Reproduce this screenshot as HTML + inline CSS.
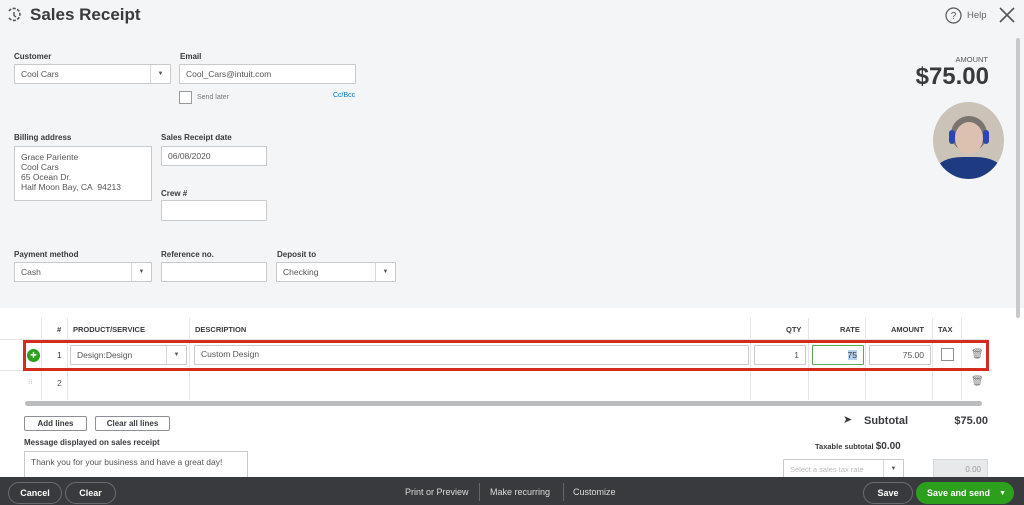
<!DOCTYPE html>
<html><head><style>
*{box-sizing:border-box;margin:0;padding:0}
body{width:1024px;height:505px;overflow:hidden;font-family:"Liberation Sans",sans-serif;background:#fff;position:relative;color:#393a3d}
.a{position:absolute}
.lbl{font-size:8px;font-weight:bold;color:#393a3d}
.in{position:absolute;background:#fff;border:1px solid #c9cacc;font-size:8.5px;color:#555;padding:0 6px;display:flex;align-items:center;border-radius:1px}
.dd{position:absolute;right:0;top:0;bottom:0;width:20px;border-left:1px solid #d4d7dc;display:flex;align-items:center;justify-content:center;font-size:6px;color:#555}
.th{position:absolute;top:325px;font-size:7.5px;font-weight:bold;color:#393a3d}
.vl{position:absolute;width:1px;background:#e3e5e8}
.btn{position:absolute;border:1px solid #8d9096;border-radius:2px;font-size:8px;font-weight:bold;display:flex;align-items:center;justify-content:center;background:#fff}
.fb{position:absolute;top:482px;height:22px;border:1px solid #6b6c72;border-radius:12px;color:#fff;font-size:9px;font-weight:bold;display:flex;align-items:center;justify-content:center}
.ft{position:absolute;top:487px;font-size:9px;color:#ddd}
</style></head><body>
<div class="a" style="left:0;top:0;width:1024px;height:308px;background:#f3f5f6"></div>
<svg class="a" style="left:6px;top:7px" width="16" height="16" viewBox="0 0 16 16"><path d="M3 4 A6 6 0 1 1 2.5 10" fill="none" stroke="#555" stroke-width="1.6" stroke-dasharray="3 1.5"/><path d="M8 5v3.5l2 1.5" fill="none" stroke="#555" stroke-width="1.4"/></svg>
<div class="a" style="left:30px;top:5px;font-size:17px;font-weight:bold;color:#393a3d">Sales Receipt</div>
<svg class="a" style="left:945px;top:7px" width="17" height="17" viewBox="0 0 17 17"><circle cx="8.5" cy="8.5" r="7.5" fill="none" stroke="#555" stroke-width="1.2"/><text x="8.5" y="12" font-size="10" text-anchor="middle" fill="#555" font-family="Liberation Sans">?</text></svg>
<div class="a" style="left:967px;top:10px;font-size:9.5px;color:#666">Help</div>
<svg class="a" style="left:999px;top:7px" width="16" height="16"><path d="M1 1L15 15M15 1L1 15" stroke="#555" stroke-width="1.6"/></svg>
<div class="a" style="left:1016px;top:38px;width:4px;height:280px;background:#c8c9cc;border-radius:2px"></div>

<div class="a lbl" style="left:14px;top:52px">Customer</div>
<div class="in" style="left:14px;top:64px;width:157px;height:20px">Cool Cars<div class="dd">▼</div></div>
<div class="a lbl" style="left:180px;top:52px">Email</div>
<div class="in" style="left:179px;top:64px;width:177px;height:20px">Cool_Cars@intuit.com</div>
<div class="a" style="left:179px;top:91px;width:13px;height:13px;border:1px solid #999;background:#fff"></div>
<div class="a" style="left:197px;top:94px;font-size:7px;color:#777">Send later</div>
<div class="a" style="left:333px;top:92px;font-size:7px;color:#0077c5">Cc/Bcc</div>

<div class="a" style="right:36px;top:55px;font-size:7.5px;color:#555">AMOUNT</div>
<div class="a" style="right:35px;top:63px;font-size:24px;font-weight:bold;color:#393a3d">$75.00</div>
<div class="a" style="left:933px;top:102px;width:71px;height:77px;border-radius:50%;background:#cbc3b8;overflow:hidden">
<div class="a" style="left:18px;top:14px;width:36px;height:36px;border-radius:50%;background:#7a7470"></div>
<div class="a" style="left:22px;top:20px;width:28px;height:32px;border-radius:50%;background:#dcc0b0"></div>
<div class="a" style="left:16px;top:28px;width:6px;height:14px;border-radius:3px;background:#2a46b0"></div>
<div class="a" style="left:50px;top:28px;width:6px;height:14px;border-radius:3px;background:#2a46b0"></div>
<div class="a" style="left:4px;top:55px;width:64px;height:30px;background:#1e3a80;border-radius:40% 40% 0 0"></div></div>

<div class="a lbl" style="left:14px;top:133px">Billing address</div>
<div class="a" style="left:14px;top:146px;width:138px;height:55px;background:#fff;border:1px solid #c9cacc;font-size:8.5px;color:#555;padding:5px 6px;line-height:10px">Grace Pariente<br>Cool Cars<br>65 Ocean Dr.<br>Half Moon Bay, CA&nbsp; 94213</div>
<div class="a lbl" style="left:161px;top:133px">Sales Receipt date</div>
<div class="in" style="left:161px;top:146px;width:106px;height:20px">06/08/2020</div>
<div class="a lbl" style="left:161px;top:189px">Crew #</div>
<div class="in" style="left:161px;top:200px;width:106px;height:21px"></div>

<div class="a lbl" style="left:14px;top:250px">Payment method</div>
<div class="in" style="left:14px;top:262px;width:138px;height:20px">Cash<div class="dd">▼</div></div>
<div class="a lbl" style="left:161px;top:250px">Reference no.</div>
<div class="in" style="left:161px;top:262px;width:106px;height:20px"></div>
<div class="a lbl" style="left:277px;top:250px">Deposit to</div>
<div class="in" style="left:276px;top:262px;width:120px;height:20px">Checking<div class="dd">▼</div></div>

<div class="vl" style="left:41px;top:318px;height:82px"></div>
<div class="vl" style="left:67px;top:318px;height:82px"></div>
<div class="vl" style="left:189px;top:318px;height:82px"></div>
<div class="vl" style="left:750px;top:318px;height:82px"></div>
<div class="vl" style="left:808px;top:318px;height:82px"></div>
<div class="vl" style="left:865px;top:318px;height:82px"></div>
<div class="vl" style="left:932px;top:318px;height:82px"></div>
<div class="vl" style="left:961px;top:318px;height:82px"></div>
<div class="th" style="left:57px">#</div>
<div class="th" style="left:73px">PRODUCT/SERVICE</div>
<div class="th" style="left:195px">DESCRIPTION</div>
<div class="th" style="left:786px">QTY</div>
<div class="th" style="left:840px">RATE</div>
<div class="th" style="left:891px">AMOUNT</div>
<div class="th" style="left:938px">TAX</div>
<div class="a" style="left:0;top:339px;width:988px;height:1px;background:#e3e5e8"></div>
<div class="a" style="left:0;top:370px;width:988px;height:1px;background:#e3e5e8"></div>

<div class="a" style="left:23px;top:340px;width:966px;height:31px;border:3px solid #d52b1e"></div>
<div class="a" style="left:27px;top:349px;width:13px;height:13px;border-radius:50%;background:#2ca01c;color:#fff;font-size:12px;font-weight:bold;line-height:13px;text-align:center">+</div>
<div class="a" style="left:57px;top:350px;font-size:8.5px">1</div>
<div class="in" style="left:70px;top:345px;width:117px;height:20px">Design:Design<div class="dd">▼</div></div>
<div class="in" style="left:194px;top:345px;width:555px;height:20px;align-items:flex-start;padding-top:3px">Custom Design</div>
<div class="in" style="left:754px;top:345px;width:52px;height:20px;justify-content:flex-end">1</div>
<div class="in" style="left:812px;top:345px;width:52px;height:20px;justify-content:flex-end;border-color:#5fa75a"><span style="background:#b4cff0;color:#333">75</span></div>
<div class="in" style="left:869px;top:345px;width:62px;height:20px;justify-content:flex-end">75.00</div>
<div class="a" style="left:941px;top:348px;width:13px;height:13px;border:1px solid #8d9096;background:#fff"></div>
<div class="a" style="left:971px;top:349px;font-size:10px;color:#777">🗑</div>
<div class="a" style="left:28px;top:378px;font-size:7px;color:#aaa">⁝⁝</div>
<div class="a" style="left:57px;top:378px;font-size:8.5px;color:#555">2</div>
<div class="a" style="left:971px;top:376px;font-size:10px;color:#777">🗑</div>
<div class="a" style="left:25px;top:401px;width:957px;height:5px;background:#bbbcbe;border-radius:3px"></div>

<div class="btn" style="left:24px;top:416px;width:63px;height:15px">Add lines</div>
<div class="btn" style="left:95px;top:416px;width:75px;height:15px">Clear all lines</div>
<div class="a lbl" style="left:24px;top:438px">Message displayed on sales receipt</div>
<div class="a" style="left:24px;top:451px;width:224px;height:30px;border:1px solid #c9cacc;font-size:8.5px;color:#555;padding:5px 6px">Thank you for your business and have a great day!</div>

<div class="a" style="left:843px;top:413px;font-size:11px">➤</div>
<div class="a" style="left:864px;top:415px;font-size:11px;font-weight:bold;color:#393a3d">Subtotal</div>
<div class="a" style="right:36px;top:415px;font-size:11px;font-weight:bold">$75.00</div>
<div class="a" style="left:815px;top:441px;font-size:7.5px;font-weight:bold">Taxable subtotal <span style="font-size:10px">$0.00</span></div>
<div class="in" style="left:783px;top:459px;width:121px;height:20px;color:#bbb;font-size:7.5px">Select a sales tax rate<div class="dd">▼</div></div>
<div class="a" style="left:933px;top:459px;width:55px;height:20px;background:#e8e9eb;border:1px solid #d4d7dc;font-size:8px;color:#999;text-align:right;padding:5px 6px">0.00</div>

<div class="a" style="left:0;top:477px;width:1024px;height:28px;background:#393a3d"></div>
<div class="fb" style="left:8px;width:54px">Cancel</div>
<div class="fb" style="left:65px;width:51px">Clear</div>
<div class="ft" style="left:405px">Print or Preview</div>
<div class="a" style="left:479px;top:483px;width:1px;height:18px;background:#666"></div>
<div class="ft" style="left:490px">Make recurring</div>
<div class="a" style="left:563px;top:483px;width:1px;height:18px;background:#666"></div>
<div class="ft" style="left:573px">Customize</div>
<div class="fb" style="left:863px;width:50px">Save</div>
<div class="fb" style="left:916px;width:98px;background:#2ca01c;border-color:#2ca01c;justify-content:flex-start;padding-left:10px">Save and send<span style="position:absolute;right:7px;font-size:7px">▼</span></div>
</body></html>
